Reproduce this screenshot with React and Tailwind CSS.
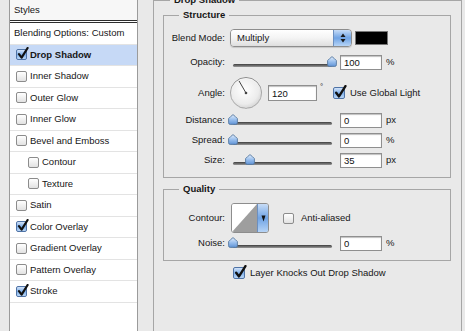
import React from "react";

const layers = [
  { name: "Drop Shadow", checked: true, selected: true },
  { name: "Inner Shadow" },
  { name: "Outer Glow" },
  { name: "Inner Glow" },
  { name: "Bevel and Emboss" },
  { name: "Contour", indent: true },
  { name: "Texture", indent: true },
  { name: "Satin" },
  { name: "Color Overlay", checked: true },
  { name: "Gradient Overlay" },
  { name: "Pattern Overlay" },
  { name: "Stroke", checked: true },
];

function Checkbox({ checked, size = 11 }) {
  if (!checked) {
    return (
      <div
        className="shrink-0 rounded-[2px] border border-[#8c8c8c] bg-gradient-to-b from-white to-[#e2e2e2]"
        style={{ width: size, height: size }}
      />
    );
  }
  return (
    <div
      className="relative shrink-0 rounded-[2px] border border-[#4f73a6] bg-gradient-to-b from-[#d3e3f8] via-[#7fb0ea] to-[#b9d6f7]"
      style={{ width: size, height: size }}
    >
      <svg
        className="absolute left-[0px] top-[-3px]"
        width={size + 1}
        height={size + 2}
        viewBox="0 0 12 13"
      >
        <path
          d="M2 7.2 L4.6 10.6 L10.6 1"
          fill="none"
          stroke="#111"
          strokeWidth="2.2"
          strokeLinecap="round"
          strokeLinejoin="round"
        />
      </svg>
    </div>
  );
}

function Field({ value, width = 42, height = 15 }) {
  return (
    <input
      readOnly
      value={value}
      className="shrink-0 bg-white border border-[#8f8f8f] shadow-[inset_0_1px_1px_rgba(0,0,0,0.25)] px-[3px] py-0 text-[9.5px] text-[#111] outline-none"
      style={{ width, height }}
    />
  );
}

function Slider({ pct }) {
  return (
    <div className="relative ml-[8px] w-[99px] h-[12px] shrink-0">
      <div className="absolute left-0 right-0 bottom-[1px] h-[3px] rounded-full bg-gradient-to-b from-[#3e3e3e] to-[#9a9a9a]" />
      <svg
        className="absolute top-0"
        style={{ left: `calc(${pct}% - 5px)` }}
        width="10"
        height="11"
        viewBox="0 0 10 11"
      >
        <defs>
          <linearGradient id="thumb" x1="0" y1="0" x2="0" y2="1">
            <stop offset="0" stopColor="#e4eefb" />
            <stop offset="0.5" stopColor="#9bc0ee" />
            <stop offset="1" stopColor="#5f93d6" />
          </linearGradient>
        </defs>
        <path
          d="M5 0.6 Q7.5 2.5 9.4 4.6 V8.8 Q9.4 10.4 7.8 10.4 H2.2 Q0.6 10.4 0.6 8.8 V4.6 Q2.5 2.5 5 0.6 Z"
          fill="url(#thumb)"
          stroke="#56789f"
          strokeWidth="0.9"
        />
      </svg>
    </div>
  );
}

function Label({ children }) {
  return <div className="w-[61px] shrink-0 text-right">{children}</div>;
}

function SliderRow({ label, pct, value, unit, h = "h-[20px]" }) {
  return (
    <div className={`flex items-center ${h}`}>
      <Label>{label}</Label>
      <Slider pct={pct} />
      <div className="ml-[8px]">
        <Field value={value} />
      </div>
      <span className="ml-[4px]">{unit}</span>
    </div>
  );
}

function Dial() {
  return (
    <svg className="ml-[4px] shrink-0" width="34" height="34" viewBox="0 0 34 34">
      <defs>
        <radialGradient id="dial" cx="0.45" cy="0.4" r="0.65">
          <stop offset="0" stopColor="#ffffff" />
          <stop offset="0.7" stopColor="#ececec" />
          <stop offset="1" stopColor="#cfcfcf" />
        </radialGradient>
      </defs>
      <circle cx="17" cy="17" r="15.5" fill="url(#dial)" stroke="#8a8a8a" strokeWidth="1" />
      <circle cx="17" cy="17.6" r="15.2" fill="none" stroke="#ffffff" strokeOpacity="0.7" strokeWidth="0.6" />
      <line x1="17" y1="17" x2="10" y2="4.9" stroke="#444" strokeWidth="1" />
      <circle cx="17" cy="17" r="1.3" fill="#444" />
    </svg>
  );
}

function BlendSelect() {
  return (
    <div className="ml-[5px] flex w-[122px] h-[18px] rounded-[4px] border border-[#8d8d8d] overflow-hidden shadow-[0_1px_1px_rgba(0,0,0,0.15)]">
      <div className="flex-1 flex items-center pl-[6px] bg-gradient-to-b from-white via-[#f4f4f4] to-[#dedede]">
        Multiply
      </div>
      <div className="w-[18px] border-l border-[#6c8fbf] flex items-center justify-center bg-gradient-to-b from-[#c7dcf6] via-[#6fa3e4] to-[#b6d4f6]">
        <svg width="6" height="10" viewBox="0 0 6 10">
          <path d="M3 0.5 L5.5 4 H0.5 Z" fill="#1a1a1a" />
          <path d="M3 9.5 L5.5 6 H0.5 Z" fill="#1a1a1a" />
        </svg>
      </div>
    </div>
  );
}

function ContourPicker() {
  return (
    <div className="ml-[6px] flex w-[38px] h-[30px] rounded-[3px] border border-[#8d8d8d] overflow-hidden">
      <div className="flex-1 bg-white">
        <svg width="100%" height="100%" viewBox="0 0 26 28" preserveAspectRatio="none">
          <path d="M0 28 L26 0 V28 Z" fill="#9e9e9e" />
        </svg>
      </div>
      <div className="w-[11px] border-l border-[#6c8fbf] flex items-center justify-center bg-gradient-to-b from-[#c7dcf6] via-[#6fa3e4] to-[#b6d4f6]">
        <svg width="5" height="7" viewBox="0 0 5 7">
          <path d="M0.5 0.5 H4.5 L2.5 6.5 Z" fill="#111" />
        </svg>
      </div>
    </div>
  );
}

export default function App() {
  return (
    <div className="w-[465px] h-[331px] overflow-hidden flex bg-[#e9e9e9] text-[9.5px] leading-[12px] text-[#161616] font-['Liberation_Sans',Arial,sans-serif]">
      {/* styles list */}
      <div className="ml-[9px] w-[129px] h-full shrink-0 bg-white border-x border-[#9b9b9b] flex flex-col">
        <div className="h-[20px] flex items-center pl-[4px] bg-[#f7f7f7]">Styles</div>
        <div className="h-[3px] border-y border-[#2e2e2e] bg-white" />
        <div className="h-[21.5px] flex items-center pl-[4px] border-b border-[#e3e3e3]">
          Blending Options: Custom
        </div>
        {layers.map((l) => (
          <div
            key={l.name}
            className={`h-[21.5px] flex items-center border-b border-[#e3e3e3] ${
              l.indent ? "pl-[18px]" : "pl-[6px]"
            } ${l.selected ? "bg-[#c6d9f6] font-bold" : ""}`}
          >
            <Checkbox checked={l.checked} />
            <span className="ml-[3px]">{l.name}</span>
          </div>
        ))}
      </div>

      {/* drop shadow panel */}
      <fieldset className="ml-[15px] -mt-[6px] w-[309px] h-[360px] shrink-0 border border-[#a6a6a6] pl-[9px] pr-[10px]">
        <legend className="ml-[7px] px-[4px] font-bold">Drop Shadow</legend>

        <fieldset className="mt-[3px] border border-[#a6a6a6] pt-[7px] pb-[7px]">
          <legend className="ml-[15px] px-[4px] font-bold">Structure</legend>

          <div className="flex items-center h-[20px]">
            <Label>Blend Mode:</Label>
            <BlendSelect />
            <div className="ml-[3px] w-[33px] h-[14px] bg-black border border-[#777]" />
          </div>

          <SliderRow label="Opacity:" pct={100} value="100" unit="%" h="h-[28px]" />

          <div className="flex items-center h-[34px]">
            <Label>Angle:</Label>
            <Dial />
            <div className="ml-[5px]">
              <Field value="120" width={49} height={16} />
            </div>
            <span className="ml-[3px] w-[5px] self-start mt-[5px] text-[8px]">°</span>
            <div className="ml-[8px] flex items-center">
              <Checkbox checked size={12} />
              <span className="ml-[5px]">Use Global Light</span>
            </div>
          </div>

          <SliderRow label="Distance:" pct={0} value="0" unit="px" />
          <SliderRow label="Spread:" pct={0} value="0" unit="%" />
          <SliderRow label="Size:" pct={17} value="35" unit="px" />
        </fieldset>

        <fieldset className="mt-[5px] border border-[#a6a6a6] pt-[8px] pb-[7px]">
          <legend className="ml-[15px] px-[4px] font-bold">Quality</legend>

          <div className="flex items-center h-[30px]">
            <Label>Contour:</Label>
            <ContourPicker />
            <div className="ml-[14px] flex items-center">
              <Checkbox />
              <span className="ml-[7px]">Anti-aliased</span>
            </div>
          </div>

          <SliderRow label="Noise:" pct={0} value="0" unit="%" />
        </fieldset>

        <div className="mt-[3px] h-[18px] flex items-center pl-[70px]">
          <Checkbox checked size={12} />
          <span className="ml-[5px]">Layer Knocks Out Drop Shadow</span>
        </div>
      </fieldset>
    </div>
  );
}
